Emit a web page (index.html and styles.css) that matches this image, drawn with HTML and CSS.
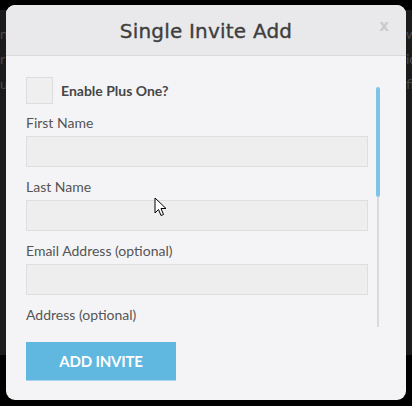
FILE: index.html
```html
<!DOCTYPE html>
<html>
<head>
<meta charset="utf-8">
<link rel="stylesheet" href="styles.css">
</head>
<body>
<div class="backdrop">
  <div class="bg-line"><span>n</span><span>w</span></div>
  <div class="bg-line"><span>r</span><span>ic</span></div>
  <div class="bg-line"><span>u</span><span>fi</span></div>
</div>
<div class="modal">
  <div class="modal-header">
    <h1 class="title">Single Invite Add</h1>
    <span class="close">x</span>
  </div>
  <div class="modal-body">
    <div class="scroll">
      <div class="fields">
        <label class="check-row">
          <span class="checkbox"></span>
          <span class="check-label">Enable Plus One?</span>
        </label>
        <div class="field-label">First Name</div>
        <div class="input"></div>
        <div class="field-label">Last Name</div>
        <div class="input"></div>
        <div class="field-label">Email Address (optional)</div>
        <div class="input"></div>
        <div class="field-label">Address (optional)</div>
        <div class="input"></div>
      </div>
      <div class="scrollbar">
        <div class="thumb"></div>
        <div class="track"></div>
      </div>
    </div>
    <div class="actions">
      <button class="btn">ADD INVITE</button>
    </div>
  </div>
</div>
<svg class="cursor" width="14" height="21" viewBox="0 0 14 21">
  <path d="M1 1 L1 16 L4.5 12.5 L7 18.5 L9.5 17.5 L7 11.5 L12 11.5 Z" fill="#fff" stroke="#000" stroke-width="1" stroke-linejoin="round"/>
</svg>
</body>
</html>
```

FILE: styles.css
```css
* { box-sizing: border-box; }
html, body { margin: 0; padding: 0; }
body {
  width: 412px;
  height: 406px;
  background: #000;
  overflow: hidden;
  position: relative;
  font-family: Lato, "Liberation Sans", sans-serif;
}
.backdrop {
  margin-top: 10px;
  height: 345px;
  background: #1b1b1b;
  padding-top: 14px;
}
.bg-line {
  display: flex;
  justify-content: space-between;
  height: 25px;
  font-size: 14px;
  line-height: 20px;
  color: #4a4a4a;
  padding-left: 0;
  padding-right: 0;
}
.bg-line span:last-child { width: 6px; overflow: hidden; white-space: nowrap; }
.modal {
  position: absolute;
  left: 6px;
  top: 5px;
  width: 400px;
  height: 395px;
  border-radius: 9px;
  background: #f4f4f6;
  overflow: hidden;
  display: flex;
  flex-direction: column;
}
.modal-header {
  height: 51px;
  background: #e9e9eb;
  border-bottom: 1px solid #d9d9db;
  display: flex;
  align-items: center;
  justify-content: center;
  position: relative;
}
.title {
  margin: 0;
  font-family: "DejaVu Sans", sans-serif;
  font-weight: normal;
  font-size: 20px;
  color: #3e3e3e;
  letter-spacing: 0.2px;
  -webkit-text-stroke: 0.35px #3e3e3e;
  padding-top: 1px;
}
.close {
  position: absolute;
  right: 17px;
  top: 12px;
  font-family: "DejaVu Sans", sans-serif;
  font-weight: bold;
  font-size: 15px;
  color: #cbcbcd;
}
.modal-body {
  padding: 0 0 0 20px;
  display: flex;
  flex-direction: column;
}
.scroll {
  height: 271px;
  overflow: hidden;
  display: flex;
  padding-top: 21px;
}
.fields {
  width: 342px;
  display: flex;
  flex-direction: column;
  flex-shrink: 0;
}
.check-row {
  display: flex;
  align-items: center;
  gap: 8px;
  height: 27px;
}
.checkbox {
  width: 27px;
  height: 27px;
  background: #efeff0;
  border: 1px solid #dcdcdd;
}
.check-label {
  font-weight: bold;
  font-size: 14px;
  color: #464646;
  padding-bottom: 1px;
}
.field-label {
  font-size: 14px;
  line-height: 20px;
  color: #555;
  margin-top: 10px;
  margin-bottom: 3px;
}
.check-row + .field-label { margin-top: 9px; }
.input {
  height: 31px;
  background: #eeeeee;
  border: 1px solid #dedede;
  flex-shrink: 0;
}
.scrollbar {
  margin-left: 8px;
  margin-top: 10px;
  width: 4px;
  display: flex;
  flex-direction: column;
  align-items: center;
}
.thumb {
  width: 4px;
  height: 110px;
  background: #7fc4e8;
  border-radius: 2px;
}
.track {
  width: 2px;
  flex: 1;
  background: #dadada;
}
.actions {
  padding-top: 15px;
}
.btn {
  width: 150px;
  height: 39px;
  border: none;
  border-bottom: 1px solid #a6d4ee;
  background: #60b7e0;
  color: #fff;
  font-family: Lato, "Liberation Sans", sans-serif;
  font-weight: bold;
  font-size: 15px;
  letter-spacing: -0.2px;
  padding: 0;
  margin: 0;
}
.cursor {
  position: absolute;
  left: 154px;
  top: 197px;
}
```
